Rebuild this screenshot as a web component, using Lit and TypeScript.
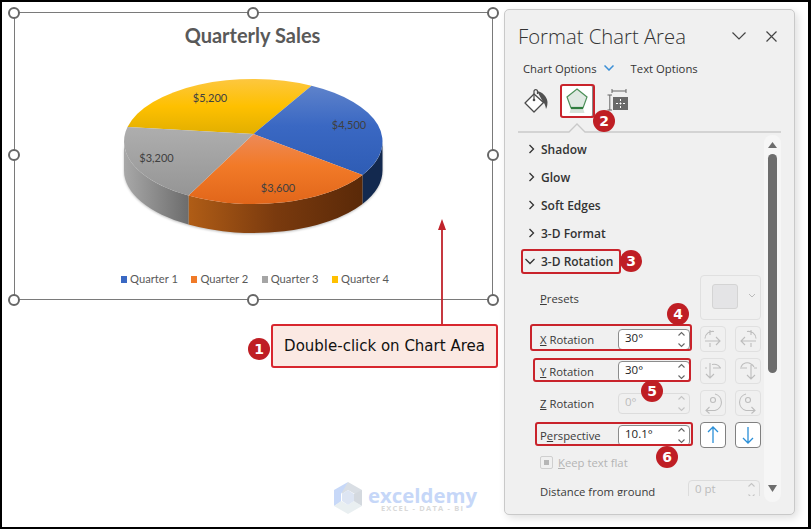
import { LitElement, html, css, svg } from 'lit';
import { customElement } from 'lit/decorators.js';

const sections = ['Shadow', 'Glow', 'Soft Edges', '3-D Format'];

const RX = 129.25;
const RY = 62.5;
const arc = (sweep: number, x: number, y: number) => `A${RX} ${RY} 0 0 ${sweep} ${x} ${y}`;

// small line icons of the rotation buttons
const icons = {
  xLeft: svg`<path d="M5 15H20M16 11l4 4-4 4M10 4v5M10 17v4M14 5.500A7.500 7.500 0 0 0 5 12.500"/>`,
  xRight: svg`<path d="M21 15H6M10 11l-4 4 4 4M16 4v5M16 17v4M12 5.500A7.500 7.500 0 0 1 21 12.500"/>`,
  yLeft: svg`<path d="M10 5V20M6 16l4 4 4-4M5 10h2M13 10h8M12 6.500A8 8 0 0 1 20.500 10"/>`,
  yRight: svg`<path d="M16 7V21M12 17l4 4 4-4M5 10h7M19 10h3M6 9A6.500 6.500 0 0 1 16 6A6.500 6.500 0 0 1 19 9"/>`,
  zLeft: svg`<circle cx="13" cy="10" r="2.500"/><path d="M15 4A8.500 8.500 0 0 1 15 20.500H6M9.500 17l-3.500 3.500 3.500 3"/>`,
  zRight: svg`<circle cx="13" cy="10" r="2.500"/><path d="M11 4A8.500 8.500 0 0 0 11 20.500H20M16.500 17l3.500 3.500-3.500 3"/>`,
};

const rotationRows = [
  { key: 'X', rest: ' Rotation', value: '30°', a: icons.xLeft, b: icons.xRight },
  { key: 'Y', rest: ' Rotation', value: '30°', a: icons.yLeft, b: icons.yRight },
  { key: 'Z', rest: ' Rotation', value: '0°', a: icons.zLeft, b: icons.zRight, off: true },
];

@customElement('app-root')
export class AppRoot extends LitElement {
  static styles = css`
    :host {
      display: block;
      width: 811px;
      height: 529px;
      font-family: 'Open Sans', sans-serif;
      color: #262626;
    }

    .page {
      position: relative;
      box-sizing: border-box;
      width: 811px;
      height: 529px;
      display: flex;
      align-items: flex-start;
      padding: 7px 0 0 12px;
      background: #fff;
      border: solid #000;
      border-width: 2px 3px 2px 2px;
      overflow: hidden;
    }

    /* chart */
    .chart {
      position: relative;
      box-sizing: border-box;
      flex: none;
      width: 479px;
      height: 288px;
      margin-top: 3px;
      border: 1.500px solid #7a7a7a;
      display: flex;
      flex-direction: column;
      align-items: center;
      font-family: Lato, sans-serif;
    }
    .title {
      margin: 9px 2px 0 0;
      font-size: 20px;
      line-height: 26px;
      font-weight: 700;
      color: #595959;
    }
    .pie {
      display: block;
      width: 300px;
      height: 202px;
      flex: none;
    }
    .pie text {
      font-size: 11px;
      fill: #404040;
      text-anchor: middle;
    }
    .pie-body {
      filter: drop-shadow(0 1px 1px rgba(0, 0, 0, 0.25));
    }
    .legend {
      display: flex;
      gap: 13.500px;
      margin: 20px 0 0 3px;
      font-size: 11.200px;
      line-height: 18px;
      color: #595959;
    }
    .legend span {
      display: flex;
      align-items: center;
      gap: 3px;
    }
    .legend i {
      width: 6px;
      height: 7px;
    }
    .q1 { background: #3a68c3; }
    .q2 { background: #f07a28; }
    .q3 { background: #a5a5a5; }
    .q4 { background: #ffc000; }

    .handle {
      position: absolute;
      box-sizing: border-box;
      width: 12px;
      height: 12px;
      border: 2px solid #666;
      border-radius: 50%;
      background: #fff;
    }
    .h-top { top: -6.500px; }
    .h-mid { top: 135.500px; }
    .h-bot { bottom: -6.500px; }
    .h-l { left: -7px; }
    .h-c { left: 232px; }
    .h-r { right: -7px; }

    /* panel */
    .panel {
      box-sizing: border-box;
      flex: none;
      width: 291px;
      height: 506px;
      margin-left: 11px;
      display: flex;
      flex-direction: column;
      background: #f0f0f0;
      border: 1px solid #c9c9c9;
      border-radius: 5px;
      box-shadow: 3px 3px 9px rgba(0, 0, 0, 0.13);
    }
    .head {
      display: flex;
      align-items: center;
      height: 36px;
      margin-top: 8px;
      padding-left: 13px;
    }
    .head h1 {
      margin: 0;
      flex: 1;
      font-size: 20.300px;
      line-height: 36px;
      font-weight: 300;
      color: #333;
    }
    .head svg {
      display: block;
      fill: none;
      stroke: #444;
      stroke-width: 1.200;
    }
    .head-close {
      margin: 0 17px 0 20px;
    }
    .options {
      display: flex;
      align-items: center;
      height: 20px;
      margin-top: 4px;
      padding-left: 18px;
      font-size: 11.300px;
      color: #333;
    }
    .options svg {
      margin: 0 17px 0 7px;
      fill: none;
      stroke: #3b8fd6;
      stroke-width: 1.500;
    }
    .tabs {
      display: flex;
      align-items: center;
      height: 35px;
      margin-top: 5px;
      padding-left: 19px;
    }
    .tabs svg {
      display: block;
      flex: none;
    }
    .tab-on {
      box-sizing: border-box;
      width: 33px;
      height: 32px;
      margin: 0 14px 0 12px;
      display: flex;
      align-items: center;
      justify-content: center;
      background: #fff;
      border: 1px solid #8a8a8a;
      border-radius: 2px;
    }
    .rule {
      display: block;
      margin: 5px 0 0 13px;
      fill: none;
      stroke: #c9c9c9;
      stroke-width: 1.300;
    }
    .scroller {
      display: flex;
      margin-top: 2px;
      height: 369px;
    }
    .list {
      width: 259px;
      height: 361px;
      overflow: hidden;
      flex: none;
      font-size: 11.300px;
      color: #3a3a3a;
    }
    .section {
      display: flex;
      align-items: center;
      height: 28px;
      padding-left: 23px;
      font-size: 12px;
      font-weight: 600;
      color: #333;
    }
    .section svg {
      width: 8px;
      height: 10px;
      margin-right: 5px;
      fill: none;
      stroke: #333;
      stroke-width: 1.300;
    }
    .section svg.open {
      width: 10px;
      margin: 0 6px 0 -3px;
    }
    .row {
      display: flex;
      align-items: center;
      height: 32px;
      padding-left: 35px;
    }
    .row label {
      flex: none;
      width: 78px;
    }
    .presets {
      height: 48px;
      align-items: flex-start;
    }
    .presets label {
      line-height: 48px;
    }
    .presets-box {
      box-sizing: border-box;
      width: 61px;
      height: 45px;
      margin-left: 82px;
      padding: 8px 0 0 11px;
      display: flex;
      border: 1px solid #e0e0e0;
      border-radius: 4px;
    }
    .swatch {
      box-sizing: border-box;
      width: 26px;
      height: 25px;
      background: #e4e4e6;
      border: 1px solid #d4d4d4;
      border-radius: 3px;
    }
    .presets-box svg {
      margin: 9px 0 0 10px;
      fill: none;
      stroke: #bbb;
    }
    .spin {
      box-sizing: border-box;
      position: relative;
      flex: none;
      width: 72px;
      height: 21px;
      padding: 0 0 3px 6px;
      display: flex;
      align-items: center;
      font-size: 11.500px;
      background: #fff;
      border: 1px solid #8c8c8c;
      border-radius: 4px;
      color: #222;
    }
    .spin svg {
      position: absolute;
      right: 3px;
      top: 1px;
      fill: none;
      stroke: #666;
      stroke-width: 1.100;
    }
    .spin.off {
      background: transparent;
      border-color: #dcdcdc;
      color: #bcbcbc;
    }
    .spin.off svg {
      stroke: #c4c4c4;
    }
    .btn {
      box-sizing: border-box;
      flex: none;
      width: 26px;
      height: 26px;
      margin-left: 10px;
      border: 1px solid #e0e0e0;
      border-radius: 4px;
    }
    .btn + .btn {
      margin-left: 9px;
    }
    .btn svg {
      display: block;
      margin: -1px;
      fill: none;
      stroke: #bdbdbd;
      stroke-width: 1.100;
    }
    .btn.on {
      background: #fff;
      border-color: #808080;
    }
    .btn.on svg {
      stroke: #2a8fd8;
      stroke-width: 1.300;
    }
    .flat {
      display: flex;
      align-items: center;
      height: 22px;
      padding-left: 35px;
      color: #b4b4b4;
    }
    .check {
      box-sizing: border-box;
      width: 13px;
      height: 13px;
      margin-right: 5px;
      padding: 3px;
      border: 1px solid #cfcfcf;
      border-radius: 2px;
    }
    .check::after {
      content: '';
      display: block;
      width: 5px;
      height: 5px;
      background: #b6b6b6;
    }
    .distance {
      height: 36px;
    }
    .distance label {
      width: 148px;
    }
    .distance .spin {
      margin-top: -2px;
    }
    .track {
      box-sizing: border-box;
      flex: none;
      width: 17px;
      height: 367px;
      padding-top: 7px;
      display: flex;
      flex-direction: column;
      align-items: center;
      background: #f6f6f6;
      border-radius: 8px;
    }
    .track svg {
      display: block;
      fill: #6d6d6d;
      flex: none;
    }
    .thumb {
      flex: none;
      width: 9px;
      height: 219px;
      margin: 6px 0 auto;
      background: #6d6d6d;
      border-radius: 5px;
    }
    .track svg:last-child {
      margin-bottom: 10px;
    }

    /* annotations over the screenshot */
    .box {
      position: absolute;
      box-sizing: border-box;
      border: 2px solid #c9232b;
      border-radius: 3px;
    }
    .box-tab { left: 558px; top: 82px; width: 35px; height: 34px; }
    .box-3d { left: 519px; top: 247px; width: 100px; height: 25px; }
    .box-x { left: 528px; top: 322px; width: 162px; height: 27px; }
    .box-y { left: 531px; top: 356px; width: 158px; height: 24px; }
    .box-p { left: 533px; top: 420px; width: 158px; height: 24px; }

    .num {
      position: absolute;
      width: 22px;
      height: 22px;
      display: flex;
      align-items: center;
      justify-content: center;
      border-radius: 50%;
      background: #bf1e24;
      color: #fff;
      font: 700 14px 'DejaVu Sans', sans-serif;
    }
    .n1 { left: 246px; top: 336px; }
    .n2 { left: 591px; top: 108px; }
    .n3 { left: 618px; top: 248px; }
    .n4 { left: 665px; top: 301px; }
    .n5 { left: 639px; top: 378px; }
    .n6 { left: 654px; top: 444px; }

    .callout {
      position: absolute;
      left: 269px;
      top: 322px;
      box-sizing: border-box;
      width: 227px;
      height: 44px;
      display: flex;
      align-items: center;
      justify-content: center;
      background: #fbe9e3;
      border: 2px solid #d8262e;
      border-radius: 3px;
      font: 15px 'DejaVu Sans', sans-serif;
      color: #111;
      white-space: nowrap;
    }
    .arrow {
      position: absolute;
      left: 431.500px;
      top: 217px;
      fill: #c0232b;
      stroke: #c0232b;
    }
    .mark {
      position: absolute;
      left: 331px;
      top: 480px;
      display: flex;
      gap: 5px;
    }
    .mark-text {
      margin-top: 4px;
      color: #c6d7f8;
      font: 700 20.400px/18px 'Open Sans', sans-serif;
    }
    .mark-text small {
      display: block;
      text-align: center;
      color: #d9d9d9;
      font: 700 7.500px/9px 'Open Sans', sans-serif;
      letter-spacing: 1.200px;
    }
  `;

  renderPie() {
    return html`
      <svg class="pie" viewBox="103.500 48 300 202">
        <defs>
          <linearGradient id="gy" gradientUnits="userSpaceOnUse" x1="0" y1="79" x2="0" y2="134">
            <stop offset="0" stop-color="#fdc73f" />
            <stop offset="0.5" stop-color="#fec000" />
            <stop offset="1" stop-color="#e2af00" />
          </linearGradient>
          <linearGradient id="gb" gradientUnits="userSpaceOnUse" x1="0" y1="85" x2="0" y2="176">
            <stop offset="0" stop-color="#5f83cb" />
            <stop offset="0.45" stop-color="#3a68c3" />
            <stop offset="1" stop-color="#2e5cb4" />
          </linearGradient>
          <linearGradient id="go" gradientUnits="userSpaceOnUse" x1="0" y1="134" x2="0" y2="204">
            <stop offset="0" stop-color="#ed8a58" />
            <stop offset="0.45" stop-color="#f27a28" />
            <stop offset="1" stop-color="#e1661a" />
          </linearGradient>
          <linearGradient id="gg" gradientUnits="userSpaceOnUse" x1="0" y1="127" x2="0" y2="196">
            <stop offset="0" stop-color="#aeaeae" />
            <stop offset="1" stop-color="#959595" />
          </linearGradient>
          <linearGradient id="so" gradientUnits="userSpaceOnUse" x1="188" y1="0" x2="362" y2="0">
            <stop offset="0" stop-color="#b05d16" />
            <stop offset="0.5" stop-color="#7a3a0e" />
            <stop offset="1" stop-color="#5a2908" />
          </linearGradient>
          <linearGradient id="sg" gradientUnits="userSpaceOnUse" x1="124" y1="0" x2="188" y2="0">
            <stop offset="0" stop-color="#a8a8a8" />
            <stop offset="1" stop-color="#6c6c6c" />
          </linearGradient>
        </defs>
        <g class="pie-body">
          <path fill="#13294f" d="M362 174.900${arc(0, 382, 141.5)}L382 170.500${arc(1, 362, 203.9)}Z" />
          <path fill="url(#so)" d="M362 174.900${arc(1, 188, 195.6)}L188 224.600${arc(0, 362, 203.9)}Z" />
          <path fill="url(#sg)" d="M188 195.600${arc(1, 123.5, 141.5)}L123.500 170.500${arc(0, 188, 224.6)}Z" />
        </g>
        <path fill="url(#gy)" d="M253 134L127 127.100${arc(1, 311, 85.7)}Z" />
        <path fill="url(#gb)" d="M253 134L311 85.700${arc(1, 362, 174.9)}Z" />
        <path fill="url(#go)" d="M253 134L362 174.900${arc(1, 188, 195.6)}Z" />
        <path fill="url(#gg)" d="M253 134L188 195.600${arc(1, 127, 127.1)}Z" />
        <text x="209.500" y="102">$5,200</text>
        <text x="348.500" y="129">$4,500</text>
        <text x="156" y="162">$3,200</text>
        <text x="277.500" y="192">$3,600</text>
      </svg>
    `;
  }

  renderChart() {
    return html`
      <div class="chart">
        <div class="title">Quarterly Sales</div>
        ${this.renderPie()}
        <div class="legend">
          <span><i class="q1"></i>Quarter 1</span>
          <span><i class="q2"></i>Quarter 2</span>
          <span><i class="q3"></i>Quarter 3</span>
          <span><i class="q4"></i>Quarter 4</span>
        </div>
        ${['h-top h-l', 'h-top h-c', 'h-top h-r', 'h-mid h-l', 'h-mid h-r', 'h-bot h-l', 'h-bot h-c', 'h-bot h-r'].map(
          (c) => html`<div class="handle ${c}"></div>`,
        )}
      </div>
    `;
  }

  renderTabs() {
    return html`
      <div class="tabs">
        <svg width="24" height="25" viewBox="0 0 24 25">
          <path d="M10 6L1 15l9 9 9.500-9.500z" fill="#fff" stroke="#4a4a4a" stroke-width="1.300" stroke-linejoin="round" />
          <path d="M10 12V3a1.800 1.800 0 0 1 3.500 0V6" fill="none" stroke="#4a4a4a" stroke-width="1.200" />
          <circle cx="10" cy="12" r="1.300" fill="#4a4a4a" />
          <path d="M13 3C18 4 23 8 23.500 14 23.500 18 22.500 20 22 21 21.500 18 20.500 15 19 14z" fill="#505050" />
        </svg>
        <div class="tab-on">
          <svg width="24" height="26" viewBox="0 0 24 26">
            <path d="M12 1L22 9 18 20H6L2 9z" fill="#dfe9e2" stroke="#4c8f58" stroke-width="1.200" />
            <path d="M6 20H18L19.500 25H4.500z" fill="#d7e3da" />
            <path d="M6 20H18" stroke="#2f7d3e" stroke-width="2.200" />
          </svg>
        </div>
        <svg width="22" height="23" viewBox="0 0 22 23">
          <path d="M5 2H19M5 0V4M19 0V4M0.500 6H5M2.800 6V21M0.500 21H5" fill="none" stroke="#666" />
          <rect x="6" y="8" width="15" height="13" fill="#6a6a6a" />
          <path d="M13.500 10V19M9 14.500H18" stroke="#fff" stroke-dasharray="2 1.500" />
        </svg>
      </div>
    `;
  }

  renderScrollbar() {
    return html`
      <div class="track">
        <svg width="9" height="6" viewBox="0 0 9 6"><path d="M4.500 0L9 6H0z" /></svg>
        <div class="thumb"></div>
        <svg width="9" height="7" viewBox="0 0 9 7"><path d="M0 0H9L4.500 7z" /></svg>
      </div>
    `;
  }

  renderSpin(value: string, off = false) {
    return html`
      <div class="spin ${off ? 'off' : ''}">
        ${value}
        <svg width="9" height="17" viewBox="0 0 9 17">
          <path d="M1.500 4.500L4.500 1.500 7.500 4.500M1.500 12.500L4.500 15.500 7.500 12.500" />
        </svg>
      </div>
    `;
  }

  renderPanel() {
    return html`
      <section class="panel">
        <div class="head">
          <h1>Format Chart Area</h1>
          <svg width="14" height="8" viewBox="0 0 14 8"><path d="M0.500 0.500L7 7 13.500 0.500" /></svg>
          <svg class="head-close" width="11" height="11" viewBox="0 0 11 11"><path d="M0.500 0.500L10.500 10.500M10.500 0.500L0.500 10.500" /></svg>
        </div>
        <div class="options">
          Chart Options
          <svg width="10" height="6" viewBox="0 0 10 6"><path d="M0.500 0.500L5 5 9.500 0.500" /></svg>
          Text Options
        </div>
        ${this.renderTabs()}
        <svg class="rule" width="263" height="10" viewBox="0 0 263 10"><path d="M0 9H51L59 1 67 9H263" /></svg>
        <div class="scroller">
          <div class="list">
            ${sections.map(
              (s) => html`
                <div class="section">
                  <svg viewBox="0 0 8 10"><path d="M1.500 1L5.500 5 1.500 9" /></svg>${s}
                </div>
              `,
            )}
            <div class="section">
              <svg class="open" viewBox="0 0 10 10"><path d="M0.500 3L5 7.500 9.500 3" /></svg>3-D Rotation
            </div>
            <div class="row presets">
              <label><u>P</u>resets</label>
              <div class="presets-box">
                <div class="swatch"></div>
                <svg width="8" height="5" viewBox="0 0 8 5"><path d="M1 1L4 4 7 1" /></svg>
              </div>
            </div>
            ${rotationRows.map(
              (r) => html`
                <div class="row">
                  <label><u>${r.key}</u>${r.rest}</label>
                  ${this.renderSpin(r.value, r.off)}
                  <div class="btn"><svg width="26" height="26" viewBox="0 0 26 26">${r.a}</svg></div>
                  <div class="btn"><svg width="26" height="26" viewBox="0 0 26 26">${r.b}</svg></div>
                </div>
              `,
            )}
            <div class="row">
              <label>P<u>e</u>rspective</label>
              ${this.renderSpin('10.1°')}
              <div class="btn on">
                <svg width="26" height="26" viewBox="0 0 26 26"><path d="M13 5V21M8 10L13 5 18 10" /></svg>
              </div>
              <div class="btn on">
                <svg width="26" height="26" viewBox="0 0 26 26"><path d="M13 5V21M8 16L13 21 18 16" /></svg>
              </div>
            </div>
            <div class="flat"><div class="check"></div><span><u>K</u>eep text flat</span></div>
            <div class="row distance">
              <label><u>D</u>istance from ground</label>
              ${this.renderSpin('0 pt', true)}
            </div>
          </div>
          ${this.renderScrollbar()}
        </div>
      </section>
    `;
  }

  render() {
    return html`
      <div class="page">
        ${this.renderChart()} ${this.renderPanel()}

        <svg class="arrow" width="16" height="106" viewBox="0 0 16 106">
          <path d="M8 10V106" stroke-width="1.800" />
          <path d="M8 0L12 11H4z" stroke="none" />
        </svg>
        <div class="callout">Double-click on Chart Area</div>
        <div class="num n1">1</div>

        <div class="box box-tab"></div>
        <div class="box box-3d"></div>
        <div class="box box-x"></div>
        <div class="box box-y"></div>
        <div class="box box-p"></div>
        <div class="num n2">2</div>
        <div class="num n3">3</div>
        <div class="num n4">4</div>
        <div class="num n5">5</div>
        <div class="num n6">6</div>

        <div class="mark">
          <svg width="30" height="32" viewBox="0 0 30 32">
            <path d="M15 0L29 8V16L15 8 9 12V8z" fill="#d9dee4" />
            <path d="M15 0L1 8V24L8 20V12z" fill="#c7d8f8" />
            <path d="M29 8V24L21 20V12z" fill="#d4d9df" />
            <path d="M1 24L15 32 29 24 21 19 15 23 8 19z" fill="#e9eff1" />
            <path d="M9 12L15 8 21 12V19L15 23 9 19z" fill="#dde5f3" />
          </svg>
          <div class="mark-text">exceldemy<small>EXCEL - DATA - BI</small></div>
        </div>
      </div>
    `;
  }
}
